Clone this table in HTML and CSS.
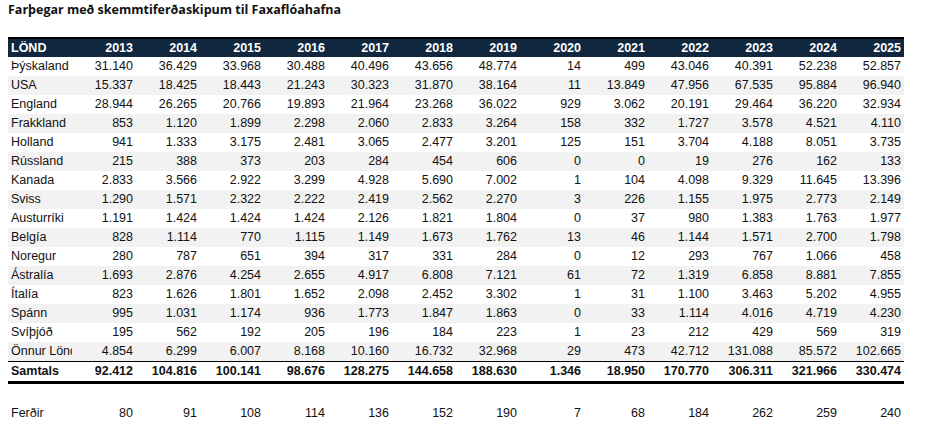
FILE: index.html
```html
<!DOCTYPE html>
<html lang="is">
<head>
<meta charset="utf-8">
<title>Farþegar með skemmtiferðaskipum til Faxaflóahafna</title>
<link rel="stylesheet" href="styles.css">
</head>
<body>
<h1 class="title">Farþegar með skemmtiferðaskipum til Faxaflóahafna</h1>
<table class="data">
<colgroup>
<col class="c-name">
<col><col><col><col><col><col><col><col><col><col><col><col><col>
</colgroup>
<thead>
<tr class="head">
<th class="name">LÖND</th><th>2013</th><th>2014</th><th>2015</th><th>2016</th><th>2017</th><th>2018</th><th>2019</th><th>2020</th><th>2021</th><th>2022</th><th>2023</th><th>2024</th><th>2025</th>
</tr>
</thead>
<tbody>
<tr><td class="name">Þýskaland</td><td>31.140</td><td>36.429</td><td>33.968</td><td>30.488</td><td>40.496</td><td>43.656</td><td>48.774</td><td>14</td><td>499</td><td>43.046</td><td>40.391</td><td>52.238</td><td>52.857</td></tr>
<tr class="alt"><td class="name">USA</td><td>15.337</td><td>18.425</td><td>18.443</td><td>21.243</td><td>30.323</td><td>31.870</td><td>38.164</td><td>11</td><td>13.849</td><td>47.956</td><td>67.535</td><td>95.884</td><td>96.940</td></tr>
<tr><td class="name">England</td><td>28.944</td><td>26.265</td><td>20.766</td><td>19.893</td><td>21.964</td><td>23.268</td><td>36.022</td><td>929</td><td>3.062</td><td>20.191</td><td>29.464</td><td>36.220</td><td>32.934</td></tr>
<tr class="alt"><td class="name">Frakkland</td><td>853</td><td>1.120</td><td>1.899</td><td>2.298</td><td>2.060</td><td>2.833</td><td>3.264</td><td>158</td><td>332</td><td>1.727</td><td>3.578</td><td>4.521</td><td>4.110</td></tr>
<tr><td class="name">Holland</td><td>941</td><td>1.333</td><td>3.175</td><td>2.481</td><td>3.065</td><td>2.477</td><td>3.201</td><td>125</td><td>151</td><td>3.704</td><td>4.188</td><td>8.051</td><td>3.735</td></tr>
<tr class="alt"><td class="name">Rússland</td><td>215</td><td>388</td><td>373</td><td>203</td><td>284</td><td>454</td><td>606</td><td>0</td><td>0</td><td>19</td><td>276</td><td>162</td><td>133</td></tr>
<tr><td class="name">Kanada</td><td>2.833</td><td>3.566</td><td>2.922</td><td>3.299</td><td>4.928</td><td>5.690</td><td>7.002</td><td>1</td><td>104</td><td>4.098</td><td>9.329</td><td>11.645</td><td>13.396</td></tr>
<tr class="alt"><td class="name">Sviss</td><td>1.290</td><td>1.571</td><td>2.322</td><td>2.222</td><td>2.419</td><td>2.562</td><td>2.270</td><td>3</td><td>226</td><td>1.155</td><td>1.975</td><td>2.773</td><td>2.149</td></tr>
<tr><td class="name">Austurríki</td><td>1.191</td><td>1.424</td><td>1.424</td><td>1.424</td><td>2.126</td><td>1.821</td><td>1.804</td><td>0</td><td>37</td><td>980</td><td>1.383</td><td>1.763</td><td>1.977</td></tr>
<tr class="alt"><td class="name">Belgía</td><td>828</td><td>1.114</td><td>770</td><td>1.115</td><td>1.149</td><td>1.673</td><td>1.762</td><td>13</td><td>46</td><td>1.144</td><td>1.571</td><td>2.700</td><td>1.798</td></tr>
<tr><td class="name">Noregur</td><td>280</td><td>787</td><td>651</td><td>394</td><td>317</td><td>331</td><td>284</td><td>0</td><td>12</td><td>293</td><td>767</td><td>1.066</td><td>458</td></tr>
<tr class="alt"><td class="name">Ástralía</td><td>1.693</td><td>2.876</td><td>4.254</td><td>2.655</td><td>4.917</td><td>6.808</td><td>7.121</td><td>61</td><td>72</td><td>1.319</td><td>6.858</td><td>8.881</td><td>7.855</td></tr>
<tr><td class="name">Ítalía</td><td>823</td><td>1.626</td><td>1.801</td><td>1.652</td><td>2.098</td><td>2.452</td><td>3.302</td><td>1</td><td>31</td><td>1.100</td><td>3.463</td><td>5.202</td><td>4.955</td></tr>
<tr class="alt"><td class="name">Spánn</td><td>995</td><td>1.031</td><td>1.174</td><td>936</td><td>1.773</td><td>1.847</td><td>1.863</td><td>0</td><td>33</td><td>1.114</td><td>4.016</td><td>4.719</td><td>4.230</td></tr>
<tr><td class="name">Svíþjóð</td><td>195</td><td>562</td><td>192</td><td>205</td><td>196</td><td>184</td><td>223</td><td>1</td><td>23</td><td>212</td><td>429</td><td>569</td><td>319</td></tr>
<tr class="alt"><td class="name">Önnur Lönd</td><td>4.854</td><td>6.299</td><td>6.007</td><td>8.168</td><td>10.160</td><td>16.732</td><td>32.968</td><td>29</td><td>473</td><td>42.712</td><td>131.088</td><td>85.572</td><td>102.665</td></tr>
<tr class="total"><td class="name">Samtals</td><td>92.412</td><td>104.816</td><td>100.141</td><td>98.676</td><td>128.275</td><td>144.658</td><td>188.630</td><td>1.346</td><td>18.950</td><td>170.770</td><td>306.311</td><td>321.966</td><td>330.474</td></tr>
<tr class="spacer"><td colspan="14"></td></tr>
<tr><td class="name">Ferðir</td><td>80</td><td>91</td><td>108</td><td>114</td><td>136</td><td>152</td><td>190</td><td>7</td><td>68</td><td>184</td><td>262</td><td>259</td><td>240</td></tr>
</tbody>
</table>
</body>
</html>
```
FILE: styles.css
```css
html, body {
  margin: 0;
  padding: 0;
  background: #ffffff;
}
body {
  padding: 2px 8px 0 8px;
  font-family: "Liberation Sans", Arial, sans-serif;
  color: #111111;
}
.title {
  margin: 0;
  height: 18px;
  line-height: 16px;
  font-family: "Open Sans", "Noto Sans", sans-serif;
  font-size: 12.5px;
  font-weight: 700;
  color: #111111;
}
.data {
  margin-top: 17px;
  width: 896px;
  table-layout: fixed;
  border-collapse: separate;
  border-spacing: 0;
  font-size: 12.5px;
}
.c-name { width: 64px; }
.data th, .data td {
  height: 19px;
  padding: 0 3px 0 3px;
  text-align: right;
  white-space: nowrap;
  overflow: hidden;
  line-height: 19px;
  box-sizing: border-box;
}
.data .name {
  text-align: left;
  text-overflow: clip;
}
.head th {
  background: #10273f;
  color: #ffffff;
  font-weight: 700;
  border-top: 2px solid #000000;
  height: 20px;
  line-height: 18px;
}
.alt td {
  background: #f2f2f2;
}
.total td {
  font-weight: 700;
  border-top: 1px solid #000000;
  border-bottom: 3px solid #000000;
  height: 23px;
  line-height: 19px;
}
.spacer td {
  height: 20px;
}
```
